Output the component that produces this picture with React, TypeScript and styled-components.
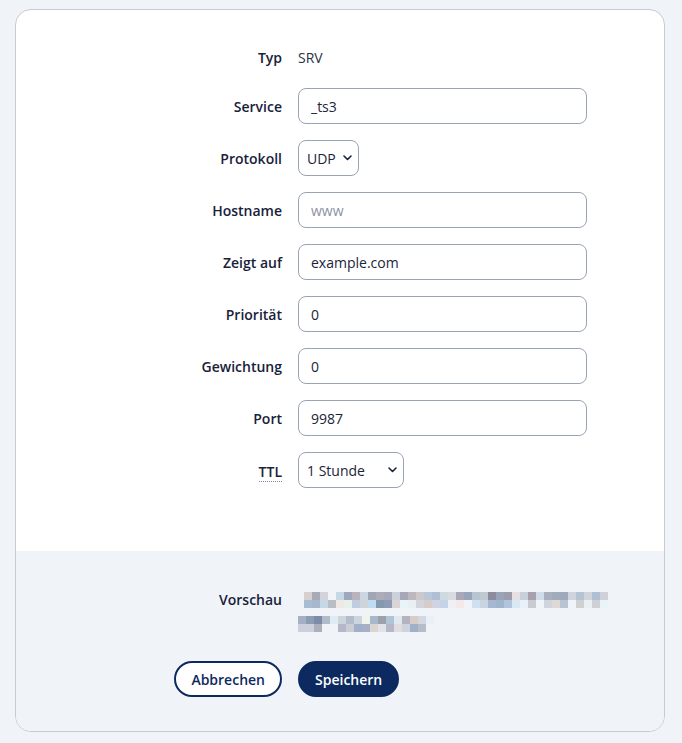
import React from "react";
import styled, { createGlobalStyle } from "styled-components";

const Global = createGlobalStyle`
  html, body { margin: 0; padding: 0; background: #f0f3f7; }
  body { font-family: "Open Sans", "Noto Sans", sans-serif; color: #1b2438; }
  * { box-sizing: border-box; }
`;

const Page = styled.div`
  padding: 9px 17px 10px 15px;
`;

const Card = styled.div`
  border: 1px solid #c5cbd5;
  border-radius: 16px;
  background: #fff;
  overflow: hidden;
`;

const FormSection = styled.div`
  padding: 32px 0 63px;
  display: grid;
  grid-template-columns: 266px 289px;
  column-gap: 16px;
  row-gap: 16px;
`;

const Label = styled.div<{ $tall?: boolean }>`
  font-weight: 600;
  font-size: 14px;
  text-align: right;
  display: flex;
  align-items: ${(p) => (p.$tall ? "flex-start" : "center")};
  justify-content: flex-end;
  padding-top: ${(p) => (p.$tall ? 0 : 2)}px;
  color: #18213a;
  line-height: 20px;
`;

const Abbr = styled.abbr`
  text-decoration: none;
  border-bottom: 1px dotted #7c88a0;
  line-height: 18px;
  padding-top: 2px;
`;

const Value = styled.div`
  height: 30px;
  display: flex;
  align-items: center;
  font-size: 14px;
  color: #2a3142;
`;

const Input = styled.input`
  width: 289px;
  height: 36px;
  border: 1px solid #9aa3b4;
  border-radius: 8px;
  padding: 0 12px;
  font-family: inherit;
  font-size: 14px;
  color: #1b2438;
  background: #fff;
  outline: none;
  &::placeholder { color: #8b93a3; }
`;

const SelectWrap = styled.div<{ $w: number }>`
  position: relative;
  width: ${(p) => p.$w}px;
  height: 36px;
`;

const Select = styled.select`
  appearance: none;
  -webkit-appearance: none;
  width: 100%;
  height: 36px;
  border: 1px solid #9aa3b4;
  border-radius: 8px;
  padding: 0 0 0 8px;
  font-family: inherit;
  font-size: 14px;
  color: #1b2438;
  background: #fff;
  outline: none;
`;

const Chevron = styled.svg`
  position: absolute;
  right: 7px;
  top: 15px;
  width: 9px;
  height: 6px;
  pointer-events: none;
`;

const Footer = styled.div`
  background: #f0f4f8;
  padding: 39px 0 34px;
  display: grid;
  grid-template-columns: 266px 289px;
  column-gap: 16px;
  row-gap: 29px;
`;

const Preview = styled.div`
  padding-top: 2px;
  display: flex;
  flex-direction: column;
  gap: 8px;
`;

const PixelLine = styled.div<{ $indent: number }>`
  display: flex;
  flex-direction: column;
  padding-left: ${(p) => p.$indent}px;
`;

const PixelRow = styled.div`
  display: flex;
  height: 8px;
`;

const Pixel = styled.span<{ $c: string }>`
  flex: 0 0 8px;
  width: 8px;
  height: 8px;
  background: #${(p) => p.$c};
`;

const ButtonCell = styled.div<{ $end?: boolean }>`
  display: flex;
  justify-content: ${(p) => (p.$end ? "flex-end" : "flex-start")};
`;

const Button = styled.button<{ $primary?: boolean }>`
  height: 36px;
  border-radius: 18px;
  padding: 0 15px;
  font-family: inherit;
  font-size: 14px;
  font-weight: 600;
  border: 2px solid #0c2a60;
  background: ${(p) => (p.$primary ? "#0c2a60" : "#fff")};
  color: ${(p) => (p.$primary ? "#fff" : "#0c2a60")};
  cursor: pointer;
`;

const line1Top = "d8d0d0 a9aab8 d4d3dc f0f4f8 c4d8e8 9fa8ba b9b4bc ccd6e2 a0a6b4 aeacb8 a8a8bb ccd0da a6a8ba bdb8c0 ccc8cc b8c8d8 b0c0d4 d0d8e0 d8dce0 a8a8b8 98a4bc b8c4d0 c0c8d0 8c8c9c 98a4b8 9c9cac e8e0e0 c8d0dc a8a0ac d0dcec a8b0c0 a0acbc a0a8bc d0d4dc b4c4d4 d0d4dc b0c0d4 d0d0d8".split(" ");
const line1Bot = "a8bcd4 a8b8cc c4d8e8 bcbcc4 f0e8e4 e8f0ec c0cce0 d0d4d8 c0dcf0 8498b0 8c9cb4 dcd4d4 e8f4f8 e8f0f4 d4d4dc d8ccc8 d0d4e0 c4d4e8 f0f0f4 f4e8e8 f0f4f8 d0e0f0 c8d4e0 a4b8d4 a0b4cc b0c4dc d8e8f4 e8f0f8 c8ccd0 f0f4f8 d0d4dc e0d8d4 b8c4d4 f0f4f8 d0d0d0 e8f0f4 d0d0d4 e8f4f8".split(" ");
const line2Top = "a4b0c4 8c9cb4 7c8ca8 b0bcc8 e0ecf4 ccd4dc b4bccc ccd4e0 f0f4ec a8b8cc 9ca0a8 b0c4d8 e0e8f0 b4b4c0 d8ccc8 d4d8e0 e8f0f8".split(" ");
const line2Bot = "ccd0dc ccd0dc acb0bc f0f4f8 f0f4f8 b4b8c8 ccccd4 a0b0c8 a8b0c8 dcd4d0 e0e4e8 b4b8c8 e0dce0 ccd4dc a0b0c8 b8bcc8".split(" ");

const Pixels = ({ rows, indent }: { rows: string[][]; indent: number }) => (
  <PixelLine $indent={indent}>
    {rows.map((r, i) => (
      <PixelRow key={i}>
        {r.map((c, j) => (
          <Pixel key={j} $c={c} />
        ))}
      </PixelRow>
    ))}
  </PixelLine>
);

const ChevronIcon = () => (
  <Chevron viewBox="0 0 9 6">
    <path d="M1 1 L4.5 4.5 L8 1" fill="none" stroke="#1b2438" strokeWidth="1.6" strokeLinecap="round" strokeLinejoin="round" />
  </Chevron>
);

const fields: { label: string; value?: string; placeholder?: string }[] = [
  { label: "Hostname", placeholder: "www" },
  { label: "Zeigt auf", value: "example.com" },
  { label: "Priorität", value: "0" },
  { label: "Gewichtung", value: "0" },
  { label: "Port", value: "9987" },
];

export default function App() {
  return (
    <>
      <Global />
      <Page>
        <Card>
          <FormSection>
            <Label>Typ</Label>
            <Value>SRV</Value>

            <Label>Service</Label>
            <Input defaultValue="_ts3" />

            <Label>Protokoll</Label>
            <SelectWrap $w={61}>
              <Select defaultValue="UDP">
                <option>UDP</option>
                <option>TCP</option>
              </Select>
              <ChevronIcon />
            </SelectWrap>

            {fields.map((f) => (
              <React.Fragment key={f.label}>
                <Label>{f.label}</Label>
                <Input defaultValue={f.value} placeholder={f.placeholder} />
              </React.Fragment>
            ))}

            <Label>
              <Abbr title="Time to live">TTL</Abbr>
            </Label>
            <SelectWrap $w={106}>
              <Select defaultValue="1 Stunde">
                <option>1 Stunde</option>
                <option>1 Tag</option>
              </Select>
              <ChevronIcon />
            </SelectWrap>
          </FormSection>
          <Footer>
            <Label $tall>Vorschau</Label>
            <Preview>
              <Pixels rows={[line1Top, line1Bot]} indent={6} />
              <Pixels rows={[line2Top, line2Bot]} indent={0} />
            </Preview>

            <ButtonCell $end>
              <Button>Abbrechen</Button>
            </ButtonCell>
            <ButtonCell>
              <Button $primary>Speichern</Button>
            </ButtonCell>
          </Footer>
        </Card>
      </Page>
    </>
  );
}
